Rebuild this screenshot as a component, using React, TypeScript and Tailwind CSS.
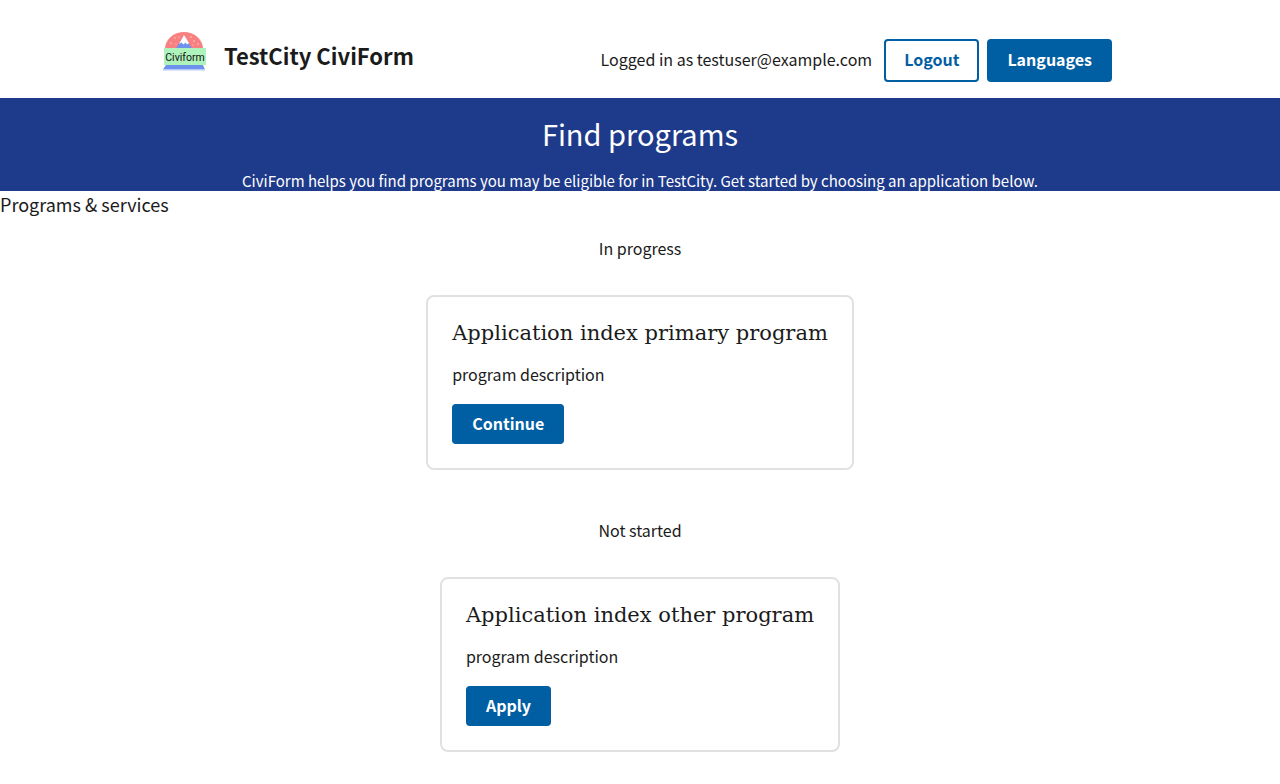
import React from "react";

type Program = { title: string; description: string; action: string };
type Section = { heading: string; programs: Program[] };

const sections: Section[] = [
  {
    heading: "In progress",
    programs: [
      { title: "Application index primary program", description: "program description", action: "Continue" },
    ],
  },
  {
    heading: "Not started",
    programs: [
      { title: "Application index other program", description: "program description", action: "Apply" },
    ],
  },
];

function Logo() {
  return (
    <svg viewBox="0 0 48 48" className="size-12 shrink-0" role="img" aria-label="CiviForm logo">
      <path d="M5 22C6 12.500 14 6 24 6s18 6.500 19 16z" fill="#f98080" />
      <path d="M24 9.500 33 24H15z" fill="#6d92ee" />
      <path d="M24 9 29 17 27 18.500 25.500 16.500 23.500 18.500 21.500 16.500 19 18z" fill="#fff" />
      <g fill="#fde0dc">
        <circle cx="15" cy="12" r=".7" />
        <circle cx="11" cy="17" r=".7" />
        <circle cx="16" cy="18" r=".6" />
        <circle cx="19" cy="11" r=".6" />
        <circle cx="31" cy="11" r=".7" />
        <circle cx="34" cy="15" r=".7" />
        <circle cx="38" cy="18" r=".7" />
        <circle cx="33" cy="19" r=".6" />
      </g>
      <path d="M6 39h37l2 4.500H3z" fill="#6d92ee" />
      <path d="M3 43.500h42v1H3z" fill="#b9caf6" />
      <path d="M4 22h42v17H4z" fill="#adf3bb" />
      <text x="25" y="34.500" textAnchor="middle" fontSize="10.500" fill="#111" className="font-['Roboto',sans-serif]">
        Civiform
      </text>
    </svg>
  );
}

function ProgramCard({ title, description, action }: Program) {
  return (
    <li className="flex flex-col items-start rounded-lg border-2 border-[#dfe1e2] p-6">
      <h4 className="font-['DejaVu_Serif',serif] text-[21px] leading-[25px]">{title}</h4>
      <p className="mt-4 text-base leading-6">{description}</p>
      <button
        type="button"
        className="mt-[18px] h-10 rounded bg-[#005ea2] px-5 pb-[3px] text-base font-bold leading-4 text-white"
      >
        {action}
      </button>
    </li>
  );
}

export default function App() {
  return (
    <div className="min-h-screen bg-white font-['Noto_Sans_CJK_SC',sans-serif] text-[#1b1b1b]">
      <header className="mx-auto flex max-w-5xl items-start justify-between px-8 pb-4 pt-[26px]">
        <a href="#" className="flex items-center gap-4">
          <Logo />
          <span className="pt-[10px] text-[22px] font-bold leading-8">TestCity CiviForm</span>
        </a>
        <nav className="flex items-center gap-2 pr-2 pt-[13px]" aria-label="Account">
          <span className="pb-[3px] pr-1 text-base leading-6">Logged in as testuser@example.com</span>
          <button
            type="button"
            className="h-[43px] rounded border-2 border-[#005ea2] bg-white px-[18px] pb-[3px] text-base font-bold leading-4 text-[#005ea2]"
          >
            Logout
          </button>
          <button
            type="button"
            className="h-[43px] rounded bg-[#005ea2] px-5 pb-[3px] text-base font-bold leading-4 text-white"
          >
            Languages
          </button>
        </nav>
      </header>

      <main>
        <section className="bg-[#1e3a8a] pt-[17px] text-center text-white">
          <h1 className="text-[29px] leading-9">Find programs</h1>
          <p className="mt-[19px] text-[15px] leading-[21px]">
            CiviForm helps you find programs you may be eligible for in TestCity. Get started by choosing an
            application below.
          </p>
        </section>

        <h2 className="text-lg leading-[26px]">Programs &amp; services</h2>

        {sections.map((section) => (
          <section key={section.heading} className="flex flex-col items-center pb-[29px] pt-4">
            <h3 className="text-base leading-[30px]">{section.heading}</h3>
            <ul className="flex flex-wrap justify-center gap-4 pt-8">
              {section.programs.map((program) => (
                <ProgramCard key={program.title} {...program} />
              ))}
            </ul>
          </section>
        ))}
      </main>
    </div>
  );
}
